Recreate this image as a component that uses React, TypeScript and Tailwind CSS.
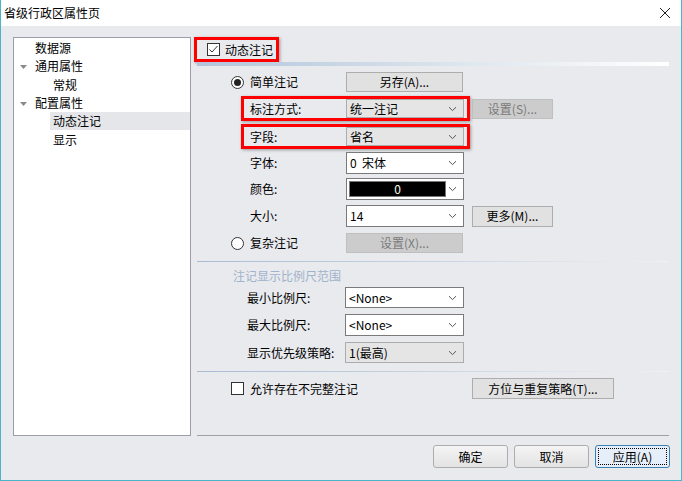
import React from 'react';

const font = { fontFamily: '"Noto Sans CJK SC", "Liberation Sans", sans-serif' };

const Chevron = () => (
  <svg width="9" height="6" viewBox="0 0 9 6" className="shrink-0">
    <path d="M1 1.2 L4.5 4.6 L8 1.2" fill="none" stroke="#555" strokeWidth="1" />
  </svg>
);

const Combo = ({ value, grey = false, w = 'w-[118px]', h = 'h-[21px]' }: { value: string; grey?: boolean; w?: string; h?: string }) => (
  <div
    className={`${w} ${h} flex items-center justify-between pl-[3px] pr-[6px] border ${
      grey ? 'bg-[#e5e5e5] border-[#acacac]' : 'bg-white border-[#7a7a7a]'
    }`}
  >
    <span className="text-[12px] leading-none text-black whitespace-pre">{value}</span>
    <Chevron />
  </div>
);

const Btn = ({ label, w, disabled = false, h = 'h-[21px]' }: { label: string; w: string; disabled?: boolean; h?: string }) => (
  <div
    className={`${w} ${h} flex items-center justify-center border text-[12px] leading-none ${
      disabled ? 'bg-[#cccccc] border-[#bfbfbf] text-[#7a7a7a]' : 'bg-[#e1e1e1] border-[#adadad] text-black'
    }`}
  >
    {label}
  </div>
);

const Radio = ({ on = false }: { on?: boolean }) => (
  <div className="w-[13px] h-[13px] rounded-full border border-[#333] bg-white flex items-center justify-center shrink-0">
    {on && <div className="w-[7px] h-[7px] rounded-full bg-[#222]" />}
  </div>
);

const Check = ({ on = false }: { on?: boolean }) => (
  <div className="w-[13px] h-[13px] border border-[#333] bg-white flex items-center justify-center shrink-0">
    {on && (
      <svg width="11" height="11" viewBox="0 0 11 11">
        <path d="M1.5 5.5 L4 8 L9.5 2" fill="none" stroke="#333" strokeWidth="1" />
      </svg>
    )}
  </div>
);

const Tri = () => (
  <svg width="7" height="4" viewBox="0 0 7 4" className="absolute left-[6px] top-[8px]">
    <path d="M0 0 L7 0 L3.5 4 Z" fill="#8a8a8a" />
  </svg>
);

const Sep = ({ grey = false }: { grey?: boolean }) => (
  <div
    className={`ml-[3px] w-[472px] h-[1px] ${
      grey ? 'bg-[#a0a0a0]' : 'bg-gradient-to-r from-[#a9bbd3] via-[#c9d4e2] to-[#eef1f5]'
    }`}
  />
);

const tree = [
  { label: '数据源', indent: 0, tri: false },
  { label: '通用属性', indent: 0, tri: true },
  { label: '常规', indent: 1, tri: false },
  { label: '配置属性', indent: 0, tri: true },
  { label: '动态注记', indent: 1, tri: false, sel: true },
  { label: '显示', indent: 1, tri: false },
];

export default function App() {
  return (
    <div className="w-[682px] h-[481px] flex flex-col border-x border-b border-[#4ab5c9] bg-[#e9eaee] text-black overflow-hidden" style={font}>
      {/* title bar */}
      <div className="h-[26px] bg-white flex items-center justify-between pl-[3px] pr-[10px] shrink-0">
        <span className="text-[12px] leading-none">省级行政区属性页</span>
        <svg width="12" height="12" viewBox="0 0 12 12">
          <path d="M1 1 L11 11 M11 1 L1 11" stroke="#222" strokeWidth="1" />
        </svg>
      </div>

      <div className="flex pt-[11px] pl-[12px]">
        {/* tree */}
        <div className="w-[178px] h-[399px] bg-white border border-[#9b9ea8] pt-[1px] shrink-0">
          {tree.map((t) => (
            <div key={t.label} className="relative h-[18.3px] flex items-center">
              {t.tri && <Tri />}
              <div
                className={`h-full flex items-center text-[12px] leading-none ${
                  t.indent ? 'ml-[36px] pl-[3px] pr-[6px] flex-1' : 'ml-[21px]'
                } ${t.sel ? 'bg-[#e5e6ea]' : ''}`}
              >
                {t.label}
              </div>
            </div>
          ))}
        </div>

        {/* right pane */}
        <div className="ml-[3px] w-[475px] flex flex-col">
          <div className="h-[25px] w-[85px] border-[3px] border-[#ff0000] shadow-[1px_1px_3px_rgba(0,0,0,0.35)] flex items-center pl-[10px] gap-[5px]">
            <Check on />
            <span className="text-[12px] leading-none">动态注记</span>
          </div>
          <div className="ml-[3px] w-[472px] h-[4px] bg-gradient-to-r from-[#b3c4da] via-[#d9e2ec] to-[#ffffff]" />

          {/* simple */}
          <div className="mt-[6px] h-[20px] flex items-center">
            <div className="ml-[37px] w-[115px] flex items-center gap-[6px]">
              <Radio on />
              <span className="text-[12px] leading-none">简单注记</span>
            </div>
            <Btn label="另存(A)..." w="w-[117px]" h="h-[20px]" />
          </div>

          <div className="mt-[4px] flex items-center">
            <div className="ml-[47px] w-[229px] h-[25px] border-[3px] border-[#ff0000] shadow-[1px_1px_3px_rgba(0,0,0,0.35)] flex items-center">
              <span className="w-[102px] pl-[6px] text-[12px] leading-none">标注方式:</span>
              <Combo value="统一注记" grey h="h-[19px]" />
            </div>
            <div className="ml-[2px]">
              <Btn label="设置(S)..." w="w-[81px]" h="h-[20px]" disabled />
            </div>
          </div>

          <div className="mt-[3px] flex items-center">
            <div className="ml-[47px] w-[229px] h-[25px] border-[3px] border-[#ff0000] shadow-[1px_1px_3px_rgba(0,0,0,0.35)] flex items-center">
              <span className="w-[102px] pl-[6px] text-[12px] leading-none">字段:</span>
              <Combo value="省名" grey h="h-[19px]" />
            </div>
          </div>

          <div className="mt-[3px] h-[22px] flex items-center">
            <span className="ml-[56px] w-[96px] text-[12px] leading-none">字体:</span>
            <Combo value="0  宋体" h="h-[22px]" />
          </div>

          <div className="mt-[4px] h-[22px] flex items-center">
            <span className="ml-[56px] w-[96px] text-[12px] leading-none">颜色:</span>
            <div className="w-[118px] h-[22px] flex items-center justify-between pl-[2px] pr-[6px] border bg-white border-[#7a7a7a]">
              <div className="w-[97px] h-[16px] bg-black border border-[#777] flex items-center justify-center text-[12px] leading-none text-[#fffbe8]">
                0
              </div>
              <Chevron />
            </div>
          </div>

          <div className="mt-[5px] h-[22px] flex items-center">
            <span className="ml-[56px] w-[96px] text-[12px] leading-none">大小:</span>
            <Combo value="14" h="h-[22px]" />
            <div className="ml-[8px]">
              <Btn label="更多(M)..." w="w-[81px]" h="h-[21px]" />
            </div>
          </div>

          <div className="mt-[6px] h-[20px] flex items-center">
            <div className="ml-[37px] w-[115px] flex items-center gap-[6px]">
              <Radio />
              <span className="text-[12px] leading-none">复杂注记</span>
            </div>
            <Btn label="设置(X)..." w="w-[117px]" h="h-[20px]" disabled />
          </div>

          <div className="mt-[8px]">
            <Sep />
          </div>

          <div className="mt-[6px] h-[16px] flex items-center">
            <span className="ml-[39px] text-[12px] leading-none text-[#9fb3cb]">注记显示比例尺范围</span>
          </div>

          <div className="mt-[3px] h-[21px] flex items-center">
            <span className="ml-[53px] w-[98px] text-[12px] leading-none">最小比例尺:</span>
            <Combo value="<None>" w="w-[119px]" h="h-[21px]" />
          </div>
          <div className="mt-[6px] h-[22px] flex items-center">
            <span className="ml-[53px] w-[98px] text-[12px] leading-none">最大比例尺:</span>
            <Combo value="<None>" w="w-[119px]" h="h-[22px]" />
          </div>
          <div className="mt-[6px] h-[21px] flex items-center">
            <span className="ml-[53px] w-[98px] text-[12px] leading-none">显示优先级策略:</span>
            <Combo value="1(最高)" grey w="w-[119px]" h="h-[21px]" />
          </div>

          <div className="mt-[8px]">
            <Sep />
          </div>

          <div className="mt-[6px] h-[21px] flex items-center">
            <div className="ml-[37px] w-[241px] flex items-center gap-[6px]">
              <Check />
              <span className="text-[12px] leading-none">允许存在不完整注记</span>
            </div>
            <Btn label="方位与重复策略(T)..." w="w-[142px]" h="h-[21px]" />
          </div>

          <div className="mt-[36px]">
            <Sep grey />
          </div>
        </div>
      </div>

      {/* footer */}
      <div className="mt-[9px] flex justify-end gap-[6px] pr-[11px]">
        <div className="w-[75px] h-[23px] rounded-[3px] border border-[#adadad] bg-gradient-to-b from-[#f4f4f4] to-[#e3e3e3] flex items-center justify-center text-[12px] leading-none">
          确定
        </div>
        <div className="w-[75px] h-[23px] rounded-[3px] border border-[#adadad] bg-gradient-to-b from-[#f4f4f4] to-[#e3e3e3] flex items-center justify-center text-[12px] leading-none">
          取消
        </div>
        <div className="w-[75px] h-[23px] rounded-[3px] border border-[#3c7fb1] bg-[#e5eef9] p-[2px]">
          <div className="w-full h-full border border-dotted border-black flex items-center justify-center text-[12px] leading-none">
            应用(A)
          </div>
        </div>
      </div>
    </div>
  );
}
